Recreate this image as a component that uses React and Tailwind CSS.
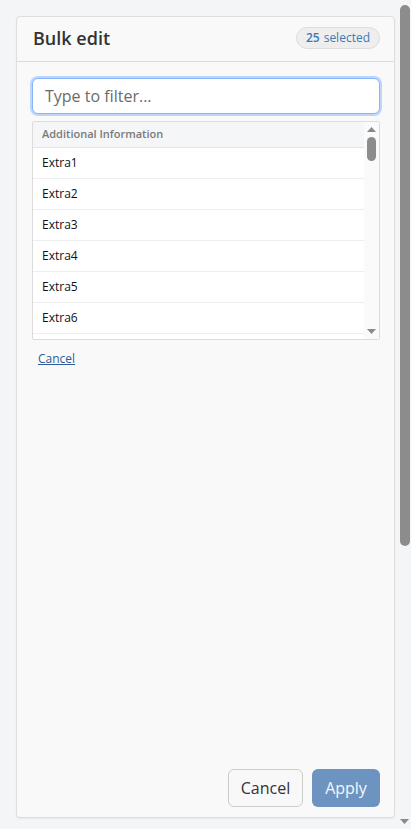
import React from "react";

const rows = ["Extra1", "Extra2", "Extra3", "Extra4", "Extra5", "Extra6"];

export default function App() {
  return (
    <div
      className="flex h-[829px] w-[411px] overflow-hidden bg-[#f4f5f7]"
      style={{ fontFamily: '"Open Sans", "Noto Sans", sans-serif' }}
    >
      <div className="w-[396px] shrink-0 pl-4 pt-4">
        <div className="flex h-[802px] w-[379px] flex-col rounded-[4px] border border-[#dedede] bg-[#f9f9f9] shadow-[0_1px_2px_rgba(0,0,0,0.06)]">
          <div className="flex h-[45px] shrink-0 items-center justify-between border-b border-[#dcdcdc] pb-[3px] pl-4 pr-[14px]">
            <span className="text-[18px] font-semibold leading-none text-[#333333]">Bulk edit</span>
            <span className="flex h-[22px] items-center rounded-full border border-[#dddddd] bg-[#eeeeee] px-[9px] text-[12px] text-[#3d78b3]">
              <b className="mr-[4px] font-semibold">25</b>selected
            </span>
          </div>
          <div className="flex flex-1 flex-col pl-[15px] pr-[14px] pt-[16px]">
            <div className="flex h-[36px] items-center rounded-[6px] border border-[#86b7fe] bg-white px-[12px] text-[16px] text-[#6b6b6b] shadow-[0_0_0_2px_rgba(13,110,253,0.25)]">
              Type to filter...
            </div>
            <div className="mt-[7px] flex h-[219px] overflow-hidden rounded-[2px] border border-[#dcdcdc] bg-white">
              <div className="flex flex-1 flex-col">
                <div className="flex h-[26px] shrink-0 items-center border-b border-[#e4e4e4] bg-[#f5f6f8] pl-[9px] text-[11px] font-semibold text-[#7a7a7a]">
                  Additional Information
                </div>
                {rows.map((r) => (
                  <div
                    key={r}
                    className="flex h-[31px] shrink-0 items-center border-b border-[#eeeeee] pl-[9px] text-[12px] text-[#111111]"
                  >
                    {r}
                  </div>
                ))}
                <div className="flex-1" />
              </div>
              <div className="flex w-[15px] shrink-0 flex-col items-center bg-[#fafafa]">
                <svg width="9" height="5" viewBox="0 0 9 5" className="mt-[5px]">
                  <path d="M0 5 L4.5 0 L9 5 Z" fill="#8a8a8a" />
                </svg>
                <div className="mt-[5px] h-[24px] w-[9px] rounded-full bg-[#8c8c8c]" />
                <div className="flex-1" />
                <svg width="9" height="5" viewBox="0 0 9 5" className="mb-[5px]">
                  <path d="M0 0 L9 0 L4.5 5 Z" fill="#8a8a8a" />
                </svg>
              </div>
            </div>
            <div className="mt-[9px] pl-[6px] leading-[16px]">
              <span className="text-[12px] leading-[16px] text-[#2e5c99] underline">Cancel</span>
            </div>
            <div className="flex-1" />
            <div className="mb-[10px] flex justify-end gap-[9px]">
              <button className="h-[38px] w-[75px] rounded-[6px] border border-[#cccccc] bg-[#f8f8f8] text-[16px] text-[#333333]">
                Cancel
              </button>
              <button className="h-[38px] w-[68px] rounded-[6px] bg-[#6d94c1] text-[16px] text-[#f4f7fb]">
                Apply
              </button>
            </div>
          </div>
        </div>
      </div>
      <div className="flex w-[15px] shrink-0 flex-col items-center">
        <div className="ml-[2px] mt-[5px] h-[541px] w-[10px] rounded-full bg-[#8c8c8c]" />
        <div className="flex-1" />
        <svg width="9" height="5" viewBox="0 0 9 5" className="mb-[5px] ml-[2px]">
          <path d="M0 0 L9 0 L4.5 5 Z" fill="#8a8a8a" />
        </svg>
      </div>
    </div>
  );
}
